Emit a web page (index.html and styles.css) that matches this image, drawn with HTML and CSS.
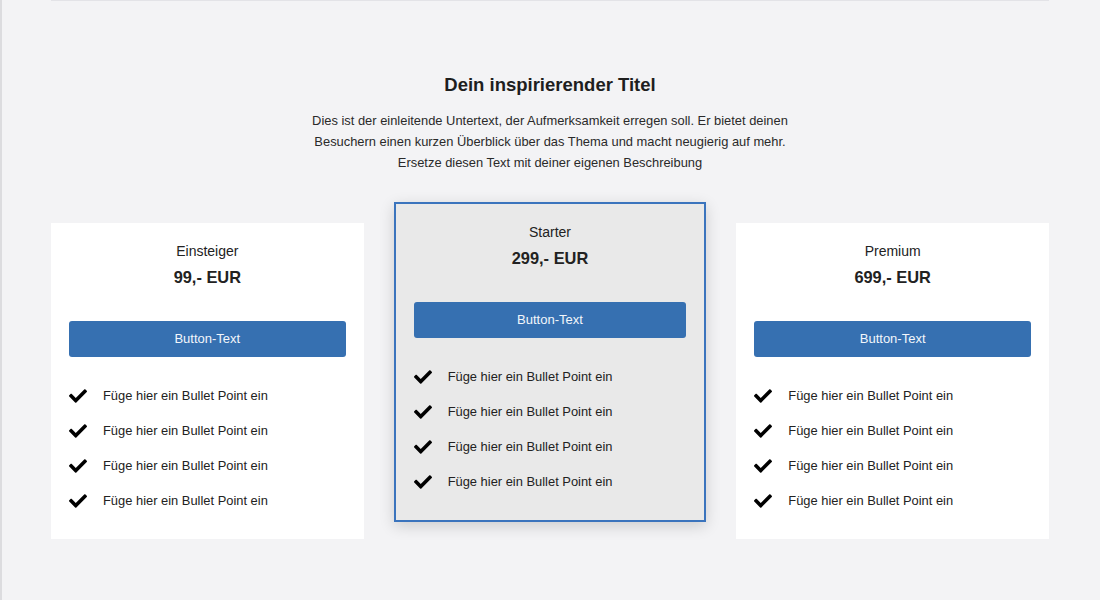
FILE: index.html
```html
<!DOCTYPE html>
<html lang="de">
<head>
<meta charset="utf-8">
<title>Preise</title>
<link rel="stylesheet" href="styles.css">
</head>
<body>
<main class="page">
  <section class="pricing">
    <h2 class="pricing-title">Dein inspirierender Titel</h2>
    <p class="pricing-intro">Dies ist der einleitende Untertext, der Aufmerksamkeit erregen soll. Er bietet deinen Besuchern einen kurzen Überblick über das Thema und macht neugierig auf mehr. Ersetze diesen Text mit deiner eigenen Beschreibung</p>
    <div class="plans">
      <div class="plan">
        <h3 class="plan-name">Einsteiger</h3>
        <div class="plan-price">99,- EUR</div>
        <a class="plan-button" href="#">Button-Text</a>
        <ul class="plan-features">
          <li><svg class="check" viewBox="0 0 512 512"><path d="M173.898 439.404l-166.4-166.4c-9.997-9.997-9.997-26.206 0-36.204l36.203-36.204c9.997-9.998 26.207-9.998 36.204 0L192 312.69 432.095 72.596c9.997-9.997 26.207-9.997 36.204 0l36.203 36.204c9.997 9.997 9.997 26.206 0 36.204l-294.4 294.401c-9.998 9.997-26.207 9.997-36.204-.001z"/></svg><span>Füge hier ein Bullet Point ein</span></li>
          <li><svg class="check" viewBox="0 0 512 512"><path d="M173.898 439.404l-166.4-166.4c-9.997-9.997-9.997-26.206 0-36.204l36.203-36.204c9.997-9.998 26.207-9.998 36.204 0L192 312.69 432.095 72.596c9.997-9.997 26.207-9.997 36.204 0l36.203 36.204c9.997 9.997 9.997 26.206 0 36.204l-294.4 294.401c-9.998 9.997-26.207 9.997-36.204-.001z"/></svg><span>Füge hier ein Bullet Point ein</span></li>
          <li><svg class="check" viewBox="0 0 512 512"><path d="M173.898 439.404l-166.4-166.4c-9.997-9.997-9.997-26.206 0-36.204l36.203-36.204c9.997-9.998 26.207-9.998 36.204 0L192 312.69 432.095 72.596c9.997-9.997 26.207-9.997 36.204 0l36.203 36.204c9.997 9.997 9.997 26.206 0 36.204l-294.4 294.401c-9.998 9.997-26.207 9.997-36.204-.001z"/></svg><span>Füge hier ein Bullet Point ein</span></li>
          <li><svg class="check" viewBox="0 0 512 512"><path d="M173.898 439.404l-166.4-166.4c-9.997-9.997-9.997-26.206 0-36.204l36.203-36.204c9.997-9.998 26.207-9.998 36.204 0L192 312.69 432.095 72.596c9.997-9.997 26.207-9.997 36.204 0l36.203 36.204c9.997 9.997 9.997 26.206 0 36.204l-294.4 294.401c-9.998 9.997-26.207 9.997-36.204-.001z"/></svg><span>Füge hier ein Bullet Point ein</span></li>
        </ul>
      </div>
      <div class="plan plan-featured">
        <h3 class="plan-name">Starter</h3>
        <div class="plan-price">299,- EUR</div>
        <a class="plan-button" href="#">Button-Text</a>
        <ul class="plan-features">
          <li><svg class="check" viewBox="0 0 512 512"><path d="M173.898 439.404l-166.4-166.4c-9.997-9.997-9.997-26.206 0-36.204l36.203-36.204c9.997-9.998 26.207-9.998 36.204 0L192 312.69 432.095 72.596c9.997-9.997 26.207-9.997 36.204 0l36.203 36.204c9.997 9.997 9.997 26.206 0 36.204l-294.4 294.401c-9.998 9.997-26.207 9.997-36.204-.001z"/></svg><span>Füge hier ein Bullet Point ein</span></li>
          <li><svg class="check" viewBox="0 0 512 512"><path d="M173.898 439.404l-166.4-166.4c-9.997-9.997-9.997-26.206 0-36.204l36.203-36.204c9.997-9.998 26.207-9.998 36.204 0L192 312.69 432.095 72.596c9.997-9.997 26.207-9.997 36.204 0l36.203 36.204c9.997 9.997 9.997 26.206 0 36.204l-294.4 294.401c-9.998 9.997-26.207 9.997-36.204-.001z"/></svg><span>Füge hier ein Bullet Point ein</span></li>
          <li><svg class="check" viewBox="0 0 512 512"><path d="M173.898 439.404l-166.4-166.4c-9.997-9.997-9.997-26.206 0-36.204l36.203-36.204c9.997-9.998 26.207-9.998 36.204 0L192 312.69 432.095 72.596c9.997-9.997 26.207-9.997 36.204 0l36.203 36.204c9.997 9.997 9.997 26.206 0 36.204l-294.4 294.401c-9.998 9.997-26.207 9.997-36.204-.001z"/></svg><span>Füge hier ein Bullet Point ein</span></li>
          <li><svg class="check" viewBox="0 0 512 512"><path d="M173.898 439.404l-166.4-166.4c-9.997-9.997-9.997-26.206 0-36.204l36.203-36.204c9.997-9.998 26.207-9.998 36.204 0L192 312.69 432.095 72.596c9.997-9.997 26.207-9.997 36.204 0l36.203 36.204c9.997 9.997 9.997 26.206 0 36.204l-294.4 294.401c-9.998 9.997-26.207 9.997-36.204-.001z"/></svg><span>Füge hier ein Bullet Point ein</span></li>
        </ul>
      </div>
      <div class="plan">
        <h3 class="plan-name">Premium</h3>
        <div class="plan-price">699,- EUR</div>
        <a class="plan-button" href="#">Button-Text</a>
        <ul class="plan-features">
          <li><svg class="check" viewBox="0 0 512 512"><path d="M173.898 439.404l-166.4-166.4c-9.997-9.997-9.997-26.206 0-36.204l36.203-36.204c9.997-9.998 26.207-9.998 36.204 0L192 312.69 432.095 72.596c9.997-9.997 26.207-9.997 36.204 0l36.203 36.204c9.997 9.997 9.997 26.206 0 36.204l-294.4 294.401c-9.998 9.997-26.207 9.997-36.204-.001z"/></svg><span>Füge hier ein Bullet Point ein</span></li>
          <li><svg class="check" viewBox="0 0 512 512"><path d="M173.898 439.404l-166.4-166.4c-9.997-9.997-9.997-26.206 0-36.204l36.203-36.204c9.997-9.998 26.207-9.998 36.204 0L192 312.69 432.095 72.596c9.997-9.997 26.207-9.997 36.204 0l36.203 36.204c9.997 9.997 9.997 26.206 0 36.204l-294.4 294.401c-9.998 9.997-26.207 9.997-36.204-.001z"/></svg><span>Füge hier ein Bullet Point ein</span></li>
          <li><svg class="check" viewBox="0 0 512 512"><path d="M173.898 439.404l-166.4-166.4c-9.997-9.997-9.997-26.206 0-36.204l36.203-36.204c9.997-9.998 26.207-9.998 36.204 0L192 312.69 432.095 72.596c9.997-9.997 26.207-9.997 36.204 0l36.203 36.204c9.997 9.997 9.997 26.206 0 36.204l-294.4 294.401c-9.998 9.997-26.207 9.997-36.204-.001z"/></svg><span>Füge hier ein Bullet Point ein</span></li>
          <li><svg class="check" viewBox="0 0 512 512"><path d="M173.898 439.404l-166.4-166.4c-9.997-9.997-9.997-26.206 0-36.204l36.203-36.204c9.997-9.998 26.207-9.998 36.204 0L192 312.69 432.095 72.596c9.997-9.997 26.207-9.997 36.204 0l36.203 36.204c9.997 9.997 9.997 26.206 0 36.204l-294.4 294.401c-9.998 9.997-26.207 9.997-36.204-.001z"/></svg><span>Füge hier ein Bullet Point ein</span></li>
        </ul>
      </div>
    </div>
  </section>
</main>
</body>
</html>
```
FILE: styles.css
```css
* { box-sizing: border-box; }

html, body {
  margin: 0;
  padding: 0;
  height: 100%;
}

body {
  background: #f3f3f5;
  font-family: "Liberation Sans", Arial, sans-serif;
  color: #222;
  box-shadow: inset 2px 0 0 #dcdcdf;
}

.page {
  max-width: 998px;
  margin: 0 auto;
  border-top: 1px solid #e3e3e7;
}

.pricing {
  padding-top: 72px;
  text-align: center;
}

.pricing-title {
  margin: 0;
  font-size: 18.5px;
  line-height: 23px;
  font-weight: 700;
  color: #1e1e1e;
}

.pricing-intro {
  max-width: 500px;
  margin: 14px auto 0;
  font-size: 12.9px;
  line-height: 21px;
  color: #2a2a2a;
}

.plans {
  display: grid;
  grid-template-columns: repeat(3, 1fr);
  gap: 30px;
  align-items: start;
  margin-top: 50px;
}

.plan {
  background: #fff;
  padding: 19px 18px 21px;
}

.plan-featured {
  background: #e9e9e9;
  border: 2px solid #3b74bd;
  padding: 19px 18px 21px;
  margin-top: -21px;
  box-shadow: 0 4px 14px rgba(0, 0, 0, 0.16);
}

.plan-name {
  margin: 0;
  font-size: 14px;
  line-height: 18px;
  font-weight: 400;
  color: #222;
}

.plan-price {
  margin-top: 7px;
  font-size: 16.4px;
  line-height: 20px;
  font-weight: 700;
  color: #222;
}

.plan-button {
  display: block;
  margin-top: 34px;
  height: 36px;
  line-height: 36px;
  border-radius: 3px;
  background: #3670b1;
  color: #f2f6fb;
  font-size: 13px;
  text-decoration: none;
}

.plan-features {
  list-style: none;
  margin: 21px 0 0;
  padding: 0;
  text-align: left;
}

.plan-features li {
  display: flex;
  align-items: center;
  gap: 16px;
  height: 35px;
  font-size: 12.9px;
  color: #222;
}

.check {
  width: 18px;
  height: 18px;
  flex: none;
  fill: #000;
}
```
